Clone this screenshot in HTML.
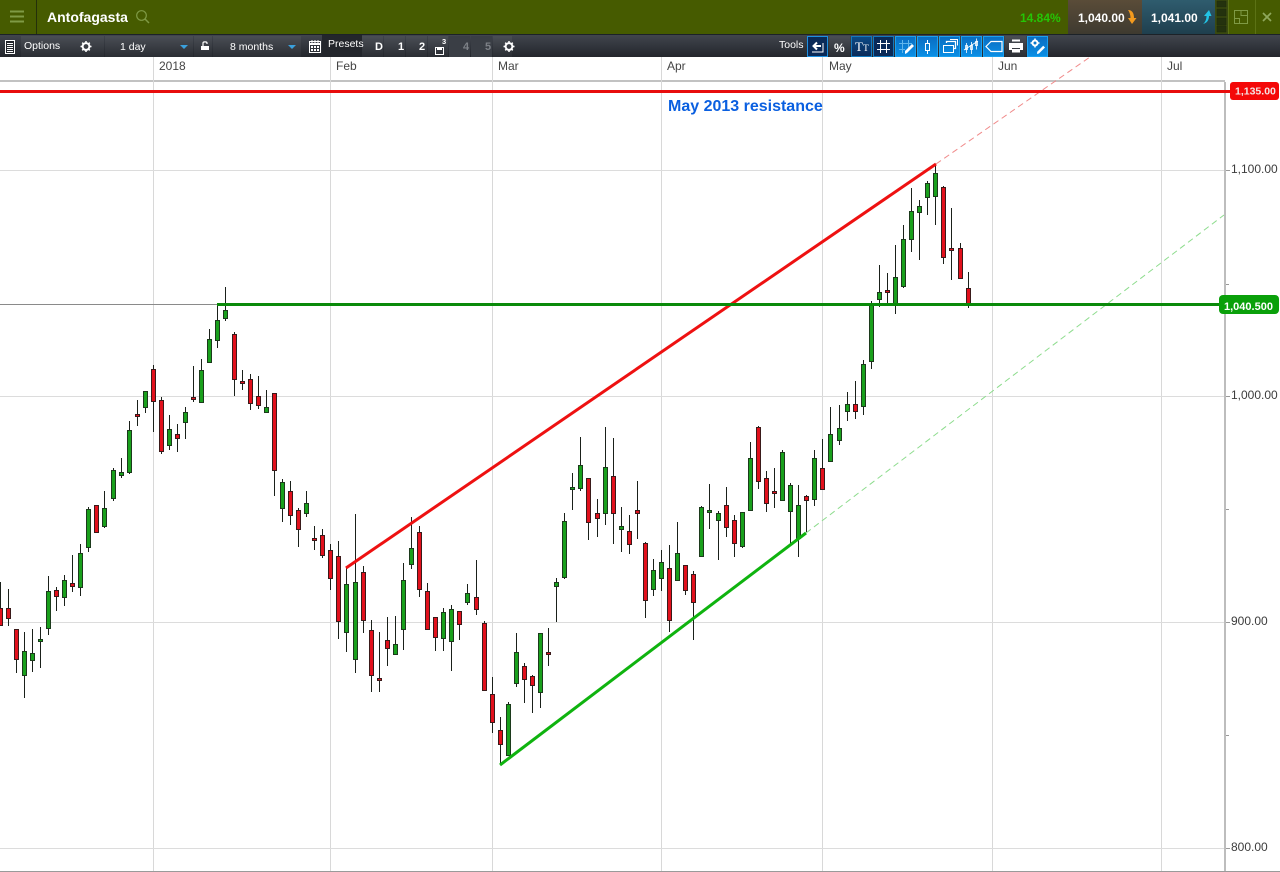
<!DOCTYPE html>
<html><head><meta charset="utf-8"><title>Antofagasta</title>
<style>html,body{margin:0;padding:0;background:#fff;width:1280px;height:872px;overflow:hidden}svg{display:block}text{font-family:"Liberation Sans",sans-serif}</style></head>
<body>
<svg width="1280" height="872" viewBox="0 0 1280 872" xmlns="http://www.w3.org/2000/svg">
<defs>
<linearGradient id="tb" x1="0" y1="0" x2="0" y2="1"><stop offset="0" stop-color="#41454d"/><stop offset="1" stop-color="#23262c"/></linearGradient>
<linearGradient id="seg" x1="0" y1="0" x2="0" y2="1"><stop offset="0" stop-color="#4a4e55"/><stop offset="1" stop-color="#2a2d33"/></linearGradient>
<linearGradient id="bb" x1="0" y1="0" x2="0" y2="1"><stop offset="0" stop-color="#0a6cc0"/><stop offset="1" stop-color="#0a8fe6"/></linearGradient>
<linearGradient id="bd" x1="0" y1="0" x2="0" y2="1"><stop offset="0" stop-color="#0b4a86"/><stop offset="1" stop-color="#0a2a58"/></linearGradient>
<linearGradient id="sell" x1="0" y1="0" x2="0" y2="1"><stop offset="0" stop-color="#5a4c38"/><stop offset="1" stop-color="#3e3a30"/></linearGradient>
<linearGradient id="buy" x1="0" y1="0" x2="0" y2="1"><stop offset="0" stop-color="#2f5c6e"/><stop offset="1" stop-color="#1f3f4e"/></linearGradient>
</defs>

<!-- header -->
<rect width="1280" height="35" fill="#465b00"/>
<rect x="36" y="0" width="1" height="34" fill="#24300a"/>
<rect y="34" width="1280" height="1" fill="#1c2228"/>
<path d="M10 11.500h14M10 16.500h14M10 21.500h14" stroke="#7f9a45" stroke-width="2"/>
<text x="47" y="22" font-size="14" font-weight="bold" fill="#fff">Antofagasta</text>
<circle cx="141.500" cy="15.500" r="4.800" fill="none" stroke="#7f9a45" stroke-width="1.200"/><path d="M145 19l4 4" stroke="#7f9a45" stroke-width="1.500"/>
<text x="1020" y="22" font-size="12" font-weight="bold" fill="#25c505">14.84%</text>
<rect x="1068" width="74" height="34" fill="url(#sell)"/>
<rect x="1142" width="73" height="34" fill="url(#buy)"/>
<text x="1078" y="22" font-size="12" font-weight="bold" fill="#fff">1,040.00</text>
<text x="1151" y="22" font-size="12" font-weight="bold" fill="#fff">1,041.00</text>
<path d="M1128 10c4 0 6 3 6 8h2.500l-4.500 6-4-6h2.500c0-3-1-6-2.500-8z" fill="#f39a1e"/>
<path d="M1209 10l-5 6h2.500c0 3-1 6-3.500 8 4-1 6-4 6-8h2.500z" fill="#22c4e6"/>
<rect x="1215" width="13" height="34" fill="#3a4a10"/>
<path d="M1217 1h9v6h-9zM1217 9h9v7h-9zM1217 18h9v7h-9zM1217 26h9v6h-9z" fill="#24320e" stroke="#1f2a0a" stroke-width=".5"/>
<rect x="1228" width="1" height="34" fill="#5c7215"/><rect x="1255" width="1" height="34" fill="#5c7215"/>
<path d="M1234.500 10.500h13v13h-13zM1234.500 18.500h5v5M1241 10.500v5h6.500" fill="none" stroke="#7f9a45" stroke-width="1"/>
<path d="M1263 13l8 8M1271 13l-8 8" stroke="#8fa85c" stroke-width="1.700"/>

<!-- toolbar -->
<rect y="35" width="1280" height="22" fill="url(#tb)"/>
<rect x="21" y="36" width="83" height="21" fill="url(#seg)"/>
<rect x="105" y="36" width="88" height="21" fill="url(#seg)"/>
<rect x="194" y="36" width="18" height="21" fill="url(#seg)"/>
<rect x="213" y="36" width="88" height="21" fill="url(#seg)"/>
<rect x="322" y="35" width="40" height="22" fill="#23262c"/>
<rect x="362" y="36" width="21" height="21" fill="url(#seg)"/>
<rect x="384" y="36" width="21" height="21" fill="url(#seg)"/>
<rect x="406" y="36" width="21" height="21" fill="url(#seg)"/>
<rect x="428" y="36" width="20" height="21" fill="url(#seg)"/>
<rect x="449" y="36" width="21" height="21" fill="#3a3e45"/>
<rect x="471" y="36" width="21" height="21" fill="#3a3e45"/>
<rect x="493" y="36" width="19" height="21" fill="url(#seg)"/>
<path d="M5.500 40.500h9v13h-9z" fill="#23262c" stroke="#fff"/><path d="M7 43.500h6M7 45.500h6M7 47.500h6M7 49.500h6M7 51.500h6" stroke="#fff" stroke-width="1"/>
<text x="24" y="49" font-size="10.500" fill="#fff">Options</text>
<g fill="none" stroke="#fff"><circle cx="86" cy="46.500" r="3.400" stroke-width="2"/><path d="M86 41v2M86 50v2M80.500 46.500h2M89.500 46.500h2M82.200 42.700l1.400 1.400M88.400 48.900l1.400 1.400M82.200 50.300l1.400-1.400M88.400 44.100l1.400-1.400" stroke-width="1.500"/></g>
<text x="120" y="50" font-size="10.500" fill="#fff">1 day</text>
<path d="M180 45h8l-4 4z" fill="#3aa0dc"/>
<path d="M201 46h8v4h-8z" fill="#fff"/><path d="M203 46v-3c0-1.500 4-1.500 4 0v1" fill="none" stroke="#fff" stroke-width="1.200"/>
<text x="230" y="50" font-size="10.500" fill="#fff">8 months</text>
<path d="M288 45h8l-4 4z" fill="#3aa0dc"/>
<path d="M309.500 41.500h11v11h-11z" fill="none" stroke="#fff"/><path d="M309 44h12" stroke="#fff" stroke-width="2"/><path d="M312 40v3M315 40v3M318 40v3" stroke="#fff"/><path d="M311 46h2v2h-2zM314 46h2v2h-2zM317 46h2v2h-2zM311 49h2v2h-2zM314 49h2v2h-2zM317 49h2v2h-2z" fill="#fff"/>
<text x="328" y="47" font-size="10.500" fill="#fff">Presets</text>
<text x="375" y="50" font-size="11" font-weight="bold" fill="#fff">D</text>
<text x="398" y="50" font-size="11" font-weight="bold" fill="#fff">1</text>
<text x="419" y="50" font-size="11" font-weight="bold" fill="#fff">2</text>
<path d="M435.500 47.500h8v7h-8z" fill="none" stroke="#fff"/><path d="M437 47h5v3h-5z" fill="#fff"/>
<text x="442" y="44" font-size="7.500" font-weight="bold" fill="#fff">3</text>
<text x="463" y="50" font-size="11" font-weight="bold" fill="#7d8187">4</text>
<text x="485" y="50" font-size="11" font-weight="bold" fill="#7d8187">5</text>
<g fill="none" stroke="#fff"><circle cx="509" cy="46.500" r="3.400" stroke-width="2"/><path d="M509 41v2M509 50v2M503.500 46.500h2M512.500 46.500h2M505.200 42.700l1.400 1.400M511.400 48.900l1.400 1.400M505.200 50.300l1.400-1.400M511.400 44.100l1.400-1.400" stroke-width="1.500"/></g>

<!-- tools -->
<text x="779" y="48" font-size="10.500" fill="#fff">Tools</text>
<rect x="807.500" y="36.500" width="20" height="20" fill="#0a2a58" stroke="#1d8fe0"/>
<path d="M821 46h-7M817 42.500l-3.500 3.500 3.500 3.500" fill="none" stroke="#fff" stroke-width="2"/><path d="M812 52h11v-9" fill="none" stroke="#fff" stroke-width="1"/>
<rect x="829" y="36" width="21" height="21" fill="url(#seg)"/>
<text x="834" y="52" font-size="12" font-weight="bold" fill="#fff">%</text>
<rect x="851.500" y="36.500" width="20" height="20" fill="url(#bd)" stroke="#1278bd"/>
<text x="855" y="51" font-size="13" fill="#fff" style="font-family:'Liberation Serif',serif">T</text><text x="863" y="51" font-size="9.500" fill="#fff" style="font-family:'Liberation Serif',serif">T</text>
<rect x="873.500" y="36.500" width="20" height="20" fill="#0a2a58" stroke="#1278bd"/>
<path d="M880.500 40v13M886.500 40v13M877 43.500h13M877 49.500h13" stroke="#fff" stroke-width="1"/>
<rect x="895.500" y="36.500" width="20" height="20" fill="url(#bb)" stroke="#1aa0ee"/>
<path d="M902.500 40v13M908.500 40v9M899 43.500h13M899 49.500h6" stroke="#5fb6ec" stroke-width="1"/><path d="M905 54l2-1 7-7-2-2-7 7z" fill="#fff"/>
<rect x="917.500" y="36.500" width="20" height="20" fill="url(#bb)" stroke="#1aa0ee"/>
<path d="M925.500 43.500h4v7h-4z" fill="none" stroke="#fff"/><path d="M927.500 40v3M927.500 51v3" stroke="#fff"/>
<rect x="939.500" y="36.500" width="20" height="20" fill="url(#bb)" stroke="#1aa0ee"/>
<path d="M943.500 45.500h10v7h-10z" fill="none" stroke="#fff"/><path d="M946.500 43v-1.500h9v7h-1.500" fill="none" stroke="#fff" stroke-width="1.300"/><path d="M950 39.500h7.500v6" fill="none" stroke="#fff"/>
<rect x="961.500" y="36.500" width="20" height="20" fill="url(#bb)" stroke="#1aa0ee"/>
<path d="M966.500 43v10M971.500 42v12M976.500 38.500v11" stroke="#fff" stroke-width=".8"/><path d="M965.500 45.500h2v4h-2zM970.500 45.500h2v4h-2zM975.500 41.500h2v4h-2z" fill="none" stroke="#fff" stroke-width=".8"/><path d="M964 50l14-9" stroke="#fff" stroke-width=".8"/>
<rect x="983.500" y="36.500" width="20" height="20" fill="url(#bb)" stroke="#1aa0ee"/>
<path d="M986 46.500l5-5h11v10h-11z" fill="none" stroke="#fff" stroke-width="1.200"/>
<rect x="1005" y="36" width="21" height="21" fill="url(#seg)"/>
<path d="M1009 43h14v7h-3v-2h-8v2h-3z" fill="#fff"/><path d="M1012 39.500h8v2h-8zM1012 49h8v3.500h-8z" fill="#fff"/>
<rect x="1027.500" y="36.500" width="20" height="20" fill="url(#bb)" stroke="#1aa0ee"/>
<circle cx="1035" cy="43" r="2.500" fill="none" stroke="#fff" stroke-width="2"/><path d="M1035 38.500v1.500M1035 46v1.500M1030.500 43h1.500M1038 43h1.500" stroke="#fff" stroke-width="1.500"/><path d="M1037 54l2-.5 6-6-1.800-1.800-6 6z" fill="#fff"/>

<!-- time axis + grid -->
<rect x="0" y="80" width="1225" height="2" fill="#c2c2c2"/>
<path d="M153.500 57V872M330.500 57V872M492.500 57V872M661.500 57V872M822.500 57V872M992.500 57V872M1161.500 57V872" stroke="#d8d8d8" stroke-width="1" fill="none"/>
<path d="M0 170.500H1224M0 396.500H1224M0 622.500H1224M0 848.500H1224" stroke="#dcdcdc" stroke-width="1" fill="none"/>
<g font-size="12" fill="#444"><text x="159" y="70">2018</text><text x="336" y="70">Feb</text><text x="498" y="70">Mar</text><text x="667" y="70">Apr</text><text x="829" y="70">May</text><text x="998" y="70">Jun</text><text x="1167" y="70">Jul</text></g>
<rect x="1224" y="82" width="2" height="790" fill="#bdbdbd"/>
<path d="M1226 170.500h4M1226 284.500h3M1226 396.500h4M1226 509.500h3M1226 622.500h4M1226 735.500h3M1226 848.500h4" stroke="#999"/>
<g font-size="12" fill="#3c3c3c"><text x="1231" y="173">1,100.00</text><text x="1231" y="399">1,000.00</text><text x="1231" y="625">900.00</text><text x="1231" y="851">800.00</text></g>

<path d="M0 304.500H217" stroke="#8a8a8a" stroke-width="1"/>

<!-- candle wicks -->
<path stroke="#1a201a" stroke-width="1" fill="none" d="M.5 582V626M8.500 589V626M16.500 629V673M24.500 632V698M32.500 629V672M40.500 627V668M48.500 576V635M56.500 587V611M64.500 575V606M72.500 555V592M80.500 544V596M88.500 507V552M96.500 505V533M104.500 491V528M113.500 468V501M121.500 458V478M129.500 421V474M137.500 400V426M145.500 391V413M153.500 365V432M161.500 397V454M169.500 415V450M177.500 424V452M185.500 407V439M193.500 366V402M201.500 359V402M209.500 329V362M217.500 305V348M225.500 287V321M234.500 332V396M242.500 370V390M250.500 374V410M258.500 376V409M266.500 390V412M274.500 393V496M282.500 479V522M290.500 481V525M298.500 508V547M306.500 491V517M314.500 526V550M322.500 529V558M330.500 544V590M338.500 541V639M346.500 567V652M355.500 514V673M363.500 566V633M371.500 620V692M379.500 632V692M387.500 617V666M395.500 616V655M403.500 563V650M411.500 517V569M419.500 526V597M427.500 583V629M435.500 617V651M443.500 608V651M451.500 605V671M459.500 611V640M467.500 584V605M476.500 560V615M484.500 621V691M492.500 677V733M500.500 717V765M508.500 702V755M516.500 633V687M524.500 663V703M532.500 675V713M540.500 633V708M548.500 628V666M556.500 578V622M564.500 513V579M572.500 473V510M580.500 437V491M588.500 478V540M597.500 499V537M605.500 427V525M613.500 438V544M621.500 507V552M629.500 515V554M637.500 481V539M645.500 542V618M653.500 559V596M661.500 550V591M669.500 545V632M677.500 522V580M685.500 565V595M693.500 571V640M701.500 506V557M709.500 484V529M718.500 511V560M726.500 487V537M734.500 515V557M742.500 512V548M750.500 442V510M758.500 426V489M766.500 471V512M774.500 468V508M782.500 450V501M790.500 483V544M798.500 485V557M806.500 495V532M814.500 450V506M822.500 439V490M830.500 407V462M839.500 405V445M847.500 392V421M855.500 381V419M863.500 360V415M871.500 301V369M879.500 265V307M887.500 273V303M895.500 245V314M903.500 225V288M911.500 188V252M919.500 200V260M927.500 181V215M935.500 165V225M943.500 186V264M951.500 208V280M960.500 243V279M968.500 272V308"/>
<!-- green bodies -->
<path fill="#19a01c" stroke="#1c3a1c" stroke-width="1" d="M22.500 651.500h4V675.500h-4zM30.500 653.500h4V660.500h-4zM38.500 639.500h4V641.500h-4zM46.500 591.500h4V628.500h-4zM62.500 580.500h4V597.500h-4zM78.500 553.500h4V587.500h-4zM86.500 509.500h4V547.500h-4zM102.500 508.500h4V526.500h-4zM111.500 470.500h4V498.500h-4zM119.500 472.500h4V475.500h-4zM127.500 430.500h4V472.500h-4zM143.500 391.500h4V407.500h-4zM167.500 429.500h4V445.500h-4zM183.500 412.500h4V422.500h-4zM199.500 370.500h4V402.500h-4zM207.500 339.500h4V362.500h-4zM215.500 320.500h4V340.500h-4zM223.500 310.500h4V318.500h-4zM264.500 407.500h4V412.500h-4zM280.500 482.500h4V508.500h-4zM304.500 503.500h4V513.500h-4zM344.500 584.500h4V632.500h-4zM353.500 582.500h4V659.500h-4zM393.500 644.500h4V654.500h-4zM401.500 580.500h4V629.500h-4zM409.500 548.500h4V564.500h-4zM441.500 612.500h4V638.500h-4zM449.500 609.500h4V641.500h-4zM465.500 593.500h4V602.500h-4zM506.500 704.500h4V755.500h-4zM514.500 652.500h4V683.500h-4zM538.500 633.500h4V692.500h-4zM554.500 582.500h4V586.500h-4zM562.500 521.500h4V577.500h-4zM570.500 487.500h4V489.500h-4zM578.500 465.500h4V488.500h-4zM603.500 467.500h4V513.500h-4zM619.500 526.500h4V529.500h-4zM651.500 570.500h4V589.500h-4zM659.500 562.500h4V578.500h-4zM675.500 553.500h4V580.500h-4zM699.500 507.500h4V556.500h-4zM707.500 510.500h4V512.500h-4zM716.500 513.500h4V520.500h-4zM740.500 512.500h4V546.500h-4zM748.500 458.500h4V510.500h-4zM780.500 452.500h4V500.500h-4zM788.500 485.500h4V511.500h-4zM796.500 505.500h4V538.500h-4zM812.500 458.500h4V499.500h-4zM828.500 434.500h4V461.500h-4zM837.500 428.500h4V440.500h-4zM845.500 404.500h4V411.500h-4zM861.500 364.500h4V406.500h-4zM869.500 305.500h4V361.500h-4zM877.500 292.500h4V299.500h-4zM893.500 277.500h4V303.500h-4zM901.500 239.500h4V286.500h-4zM909.500 211.500h4V239.500h-4zM917.500 206.500h4V212.500h-4zM925.500 183.500h4V197.500h-4zM933.500 173.500h4V196.500h-4z"/>
<!-- red bodies -->
<path fill="#e2101c" stroke="#3a1a1a" stroke-width="1" d="M-1.500 608.500h4V625.500h-4zM6.500 608.500h4V618.500h-4zM14.500 629.500h4V659.500h-4zM54.500 590.500h4V596.500h-4zM70.500 583.500h4V586.500h-4zM94.500 505.500h4V532.500h-4zM135.500 414.500h4V416.500h-4zM151.500 369.500h4V401.500h-4zM159.500 400.500h4V451.500h-4zM175.500 434.500h4V438.500h-4zM191.500 397.500h4V399.500h-4zM232.500 334.500h4V379.500h-4zM240.500 381.500h4V383.500h-4zM248.500 379.500h4V403.500h-4zM256.500 396.500h4V405.500h-4zM272.500 393.500h4V470.500h-4zM288.500 491.500h4V515.500h-4zM296.500 510.500h4V529.500h-4zM312.500 538.500h4V540.500h-4zM320.500 535.500h4V555.500h-4zM328.500 550.500h4V578.500h-4zM336.500 556.500h4V621.500h-4zM361.500 572.500h4V620.500h-4zM369.500 630.500h4V675.500h-4zM377.500 678.500h4V680.500h-4zM385.500 640.500h4V648.500h-4zM417.500 532.500h4V589.500h-4zM425.500 591.500h4V629.500h-4zM433.500 617.500h4V637.500h-4zM457.500 611.500h4V624.500h-4zM474.500 597.500h4V609.500h-4zM482.500 623.500h4V690.500h-4zM490.500 694.500h4V722.500h-4zM498.500 730.500h4V744.500h-4zM522.500 666.500h4V679.500h-4zM530.500 676.500h4V685.500h-4zM546.500 652.500h4V654.500h-4zM586.500 478.500h4V522.500h-4zM595.500 513.500h4V518.500h-4zM611.500 476.500h4V513.500h-4zM627.500 531.500h4V544.500h-4zM635.500 510.500h4V513.500h-4zM643.500 543.500h4V600.500h-4zM667.500 568.500h4V620.500h-4zM683.500 565.500h4V590.500h-4zM691.500 574.500h4V602.500h-4zM724.500 505.500h4V527.500h-4zM732.500 520.500h4V543.500h-4zM756.500 427.500h4V481.500h-4zM764.500 478.500h4V503.500h-4zM772.500 491.500h4V493.500h-4zM804.500 496.500h4V500.500h-4zM820.500 468.500h4V489.500h-4zM853.500 404.500h4V411.500h-4zM885.500 290.500h4V292.500h-4zM941.500 187.500h4V257.500h-4zM949.500 248.500h4V250.500h-4zM958.500 248.500h4V278.500h-4zM966.500 288.500h4V303.500h-4z"/>

<!-- trend lines -->
<path d="M936 164L1090 57" stroke="#f08a8a" stroke-width="1" stroke-dasharray="6 4" fill="none"/>
<path d="M806 533L1224 215" stroke="#8ddc8d" stroke-width="1" stroke-dasharray="6 4" fill="none"/>
<path d="M346 568L936 164" stroke="#ee1111" stroke-width="3" fill="none"/>
<path d="M500 765L806 533" stroke="#0fb30f" stroke-width="3" fill="none"/>
<rect x="217" y="303" width="1003" height="3" fill="#0a8a0a"/>
<rect x="0" y="90" width="1230" height="3" fill="#e80d0d"/>

<!-- price labels -->
<rect x="1230" y="82" width="49" height="18" rx="3" fill="#f40808"/>
<text x="1235" y="94.500" font-size="10.500" font-weight="bold" fill="#f4e4e4">1,135.00</text>
<rect x="1219" y="295" width="60" height="19" rx="4" fill="#0aa00a"/>
<text x="1224" y="310" font-size="11" font-weight="bold" fill="#fff">1,040.500</text>

<text x="668" y="111" font-size="16" font-weight="bold" fill="#0a5fe0">May 2013 resistance</text>
<rect y="871" width="1280" height="1" fill="#9a9a9a"/>
</svg>
</body></html>
